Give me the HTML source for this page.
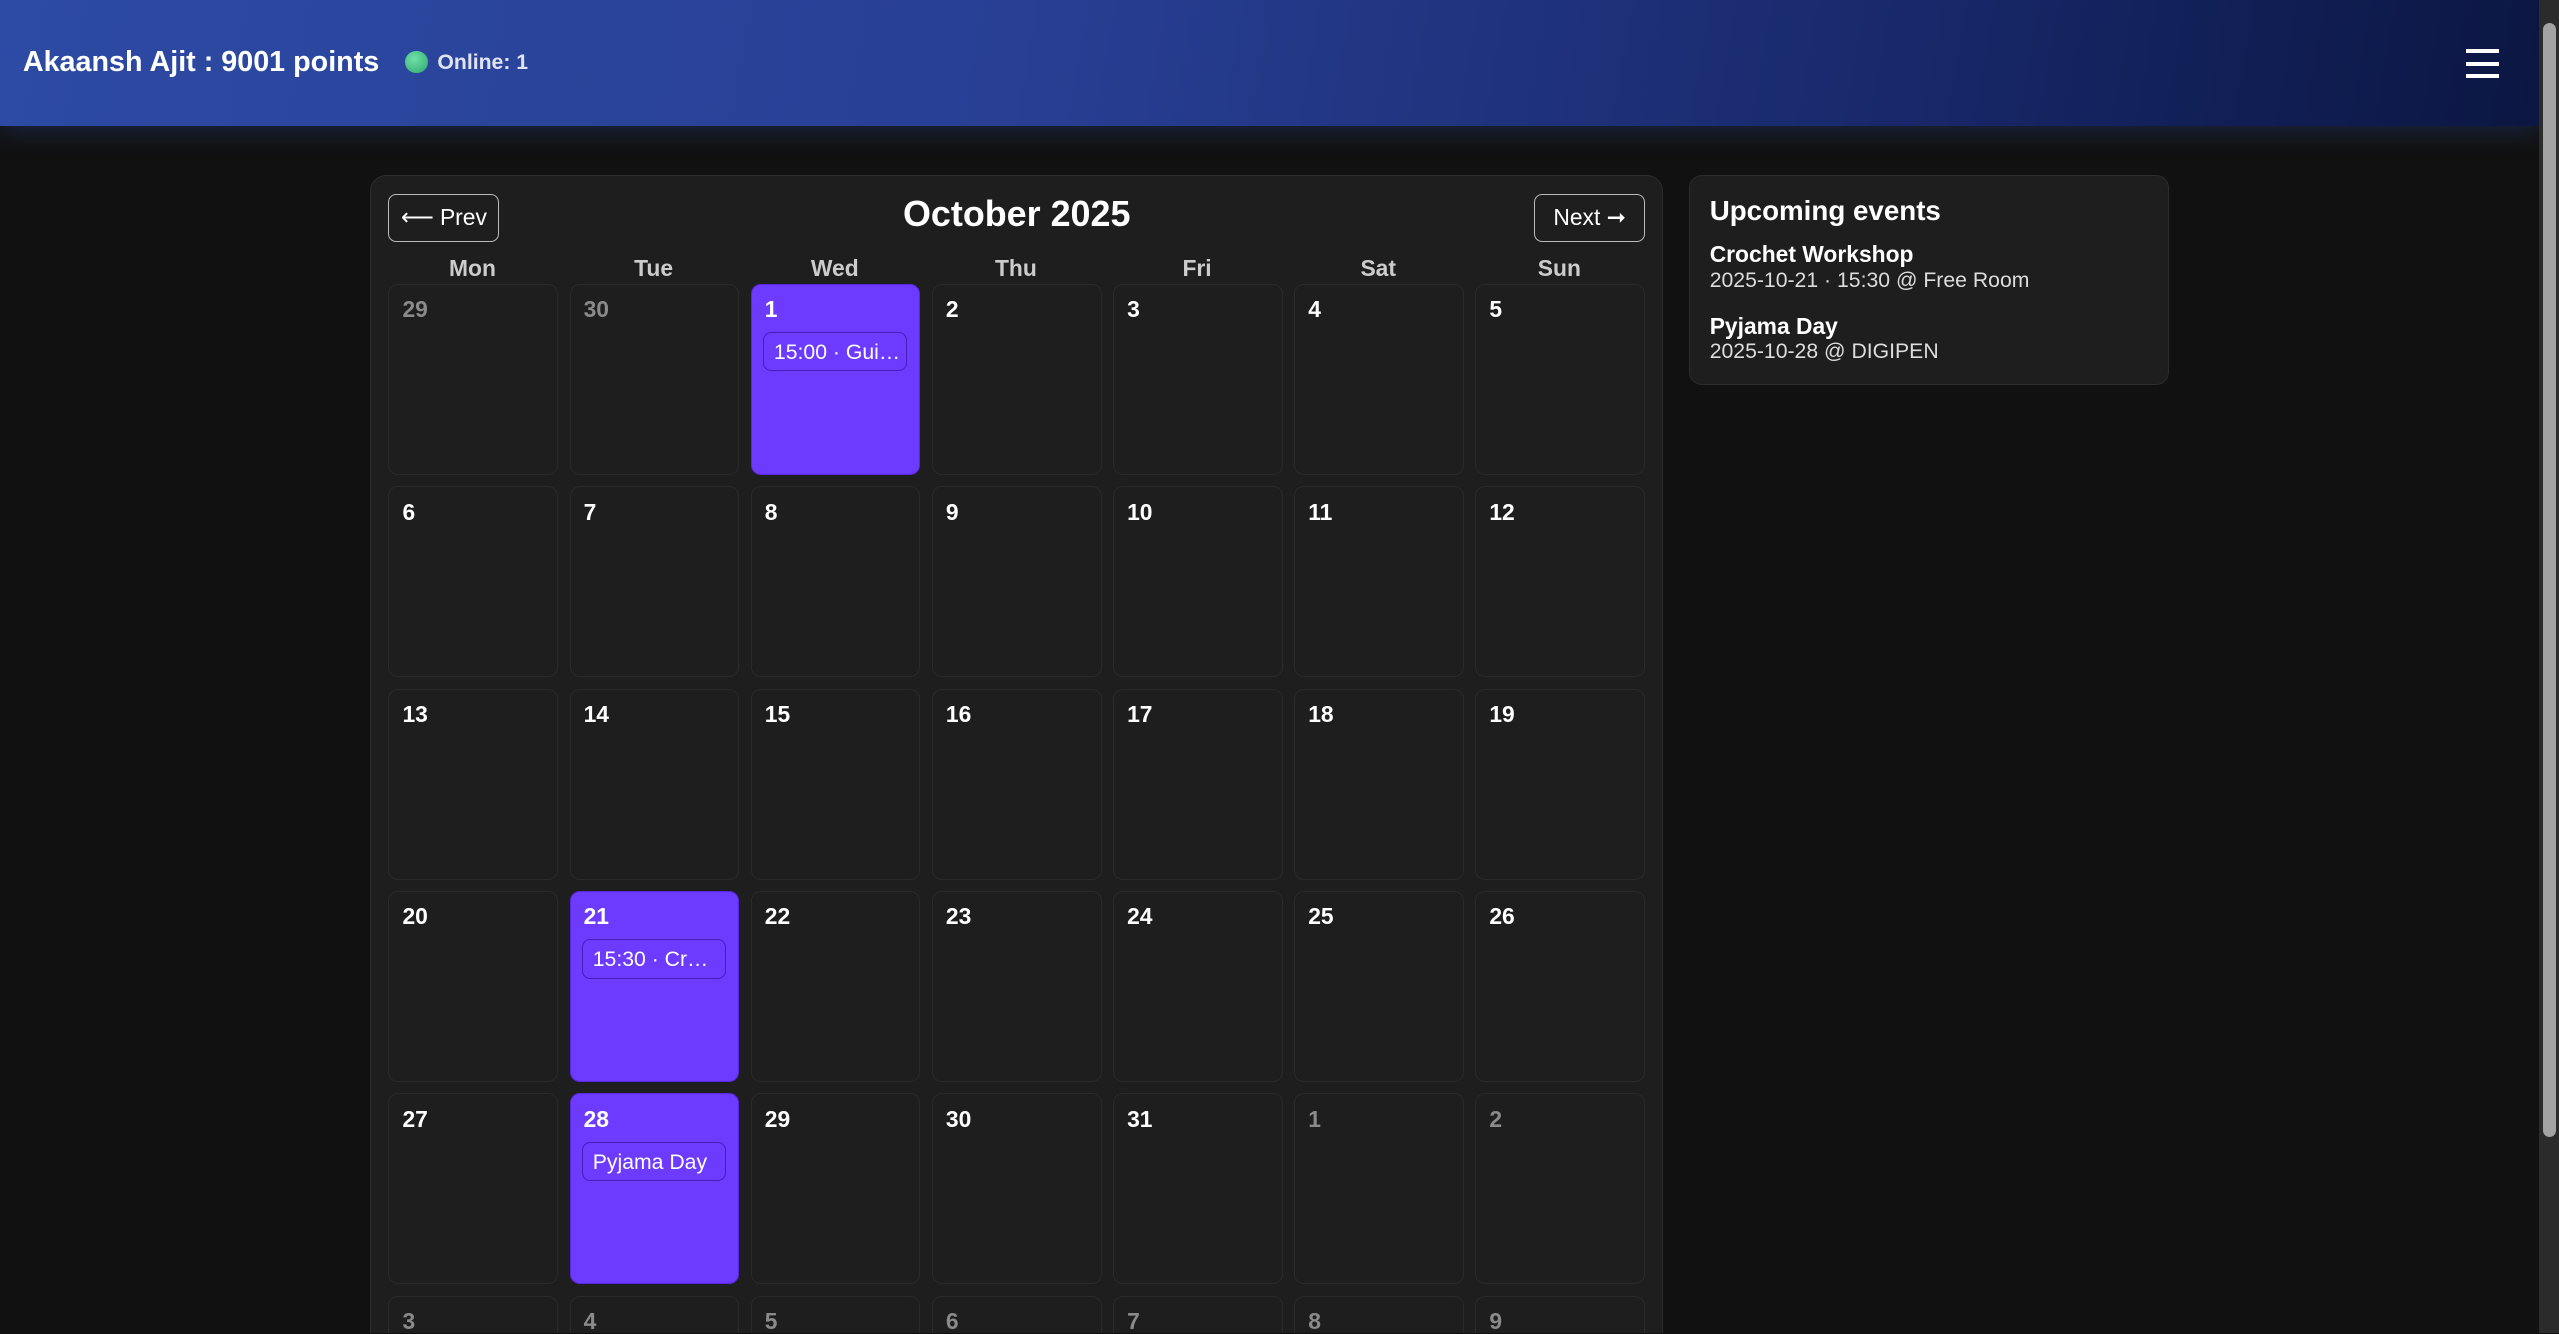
<!DOCTYPE html>
<html><head><meta charset="utf-8"><style>
html,body{margin:0;padding:0;}
body{width:2559px;height:1334px;overflow:hidden;background:#111;}
#root{zoom:1.632;width:1568px;height:817px;position:relative;overflow:hidden;background:#111;font-family:"Liberation Sans",Arial,sans-serif;color:#fff;}
.hdr{position:absolute;left:0;top:0;width:1556px;height:77px;background:linear-gradient(100deg,#2d4aa4 0%,#283f94 40%,#18286a 75%,#0b1642 100%);box-shadow:0 4px 14px rgba(40,60,120,.45);}
.name{position:absolute;left:14px;top:28px;font-size:17.6px;font-weight:bold;}
.dot{position:absolute;left:248px;top:31px;width:14px;height:14px;border-radius:50%;background:radial-gradient(circle at 40% 35%,#6fe0a8,#2fa86e);}
.onl{position:absolute;left:268px;top:31px;font-size:13px;font-weight:bold;color:#e0e4f2;}
.ham{position:absolute;left:1511px;width:20px;height:2.5px;background:#fff;}
.sb{position:absolute;left:1556px;top:0;width:12px;height:818px;background:#2b2b2b;}
.thumb{position:absolute;left:1558px;top:14px;width:8px;height:683px;background:#a3a3a3;border-radius:4px;}
.card{position:absolute;left:227px;top:107px;width:792px;height:730px;background:#1e1e1e;border:1px solid #2c2c2c;border-radius:10px;box-sizing:border-box;}
.btn{position:absolute;top:119px;height:29px;border:1px solid #bbb;border-radius:5px;box-sizing:border-box;font-size:14px;line-height:28px;text-align:center;color:#fff;}
.title{position:absolute;left:453px;width:340px;top:119px;text-align:center;font-size:22px;font-weight:bold;}
.dh{position:absolute;top:156px;width:103px;text-align:center;font-size:14px;font-weight:bold;color:#ccc;}
.cell{position:absolute;width:104px;height:117px;box-sizing:border-box;background:#1e1e1e;border:1px solid #2a2a2a;border-radius:6px;}
.cell .n{position:absolute;left:8px;top:7px;font-size:14px;font-weight:bold;color:#fff;}
.cell.o .n{color:#8a8a8a;}
.cell.e{background:#6c3bff;border-color:#5a26e0;}
.chip{position:absolute;left:7px;top:29px;width:88px;height:24px;box-sizing:border-box;border:1px solid #4a1cb8;border-radius:5px;font-size:13px;line-height:24px;padding-left:6px;white-space:nowrap;overflow:hidden;}
.up{position:absolute;left:1035px;top:107px;width:294px;height:129px;background:#1e1e1e;border:1px solid #2c2c2c;border-radius:8px;box-sizing:border-box;}
.up .t{position:absolute;left:12px;top:12px;font-size:17px;font-weight:bold;}
.up .h{position:absolute;left:12px;font-size:14px;font-weight:bold;}
.up .s{position:absolute;left:12px;font-size:13px;color:#ddd;}
</style></head><body><div id="root">
<div class="hdr">
<div class="name">Akaansh Ajit : 9001 points</div>
<div class="dot"></div>
<div class="onl">Online: 1</div>
<div class="ham" style="top:30px"></div><div class="ham" style="top:38px"></div><div class="ham" style="top:45.5px"></div>
</div>
<div class="card"></div>
<div class="btn" style="left:238px;width:68px">⟵ Prev</div>
<div class="title">October 2025</div>
<div class="btn" style="left:940px;width:68px">Next ➞</div>
<div class="up">
<div class="t">Upcoming events</div>
<div class="h" style="top:40px">Crochet Workshop</div>
<div class="s" style="top:57px">2025-10-21 · 15:30 @ Free Room</div>
<div class="h" style="top:84px">Pyjama Day</div>
<div class="s" style="top:101px">2025-10-28 @ DIGIPEN</div>
</div>
<div class="sb"></div><div class="thumb"></div>

<div class="dh" style="left:238px">Mon</div><div class="dh" style="left:349px">Tue</div><div class="dh" style="left:460px">Wed</div><div class="dh" style="left:571px">Thu</div><div class="dh" style="left:682px">Fri</div><div class="dh" style="left:793px">Sat</div><div class="dh" style="left:904px">Sun</div>

<div class="cell o" style="left:238px;top:174px"><div class="n">29</div></div>
<div class="cell o" style="left:349px;top:174px"><div class="n">30</div></div>
<div class="cell e" style="left:460px;top:174px"><div class="n">1</div><div class="chip">15:00 · Gui…</div></div>
<div class="cell" style="left:571px;top:174px"><div class="n">2</div></div>
<div class="cell" style="left:682px;top:174px"><div class="n">3</div></div>
<div class="cell" style="left:793px;top:174px"><div class="n">4</div></div>
<div class="cell" style="left:904px;top:174px"><div class="n">5</div></div>

<div class="cell" style="left:238px;top:298px"><div class="n">6</div></div>
<div class="cell" style="left:349px;top:298px"><div class="n">7</div></div>
<div class="cell" style="left:460px;top:298px"><div class="n">8</div></div>
<div class="cell" style="left:571px;top:298px"><div class="n">9</div></div>
<div class="cell" style="left:682px;top:298px"><div class="n">10</div></div>
<div class="cell" style="left:793px;top:298px"><div class="n">11</div></div>
<div class="cell" style="left:904px;top:298px"><div class="n">12</div></div>

<div class="cell" style="left:238px;top:422px"><div class="n">13</div></div>
<div class="cell" style="left:349px;top:422px"><div class="n">14</div></div>
<div class="cell" style="left:460px;top:422px"><div class="n">15</div></div>
<div class="cell" style="left:571px;top:422px"><div class="n">16</div></div>
<div class="cell" style="left:682px;top:422px"><div class="n">17</div></div>
<div class="cell" style="left:793px;top:422px"><div class="n">18</div></div>
<div class="cell" style="left:904px;top:422px"><div class="n">19</div></div>

<div class="cell" style="left:238px;top:546px"><div class="n">20</div></div>
<div class="cell e" style="left:349px;top:546px"><div class="n">21</div><div class="chip">15:30 · Cr…</div></div>
<div class="cell" style="left:460px;top:546px"><div class="n">22</div></div>
<div class="cell" style="left:571px;top:546px"><div class="n">23</div></div>
<div class="cell" style="left:682px;top:546px"><div class="n">24</div></div>
<div class="cell" style="left:793px;top:546px"><div class="n">25</div></div>
<div class="cell" style="left:904px;top:546px"><div class="n">26</div></div>

<div class="cell" style="left:238px;top:670px"><div class="n">27</div></div>
<div class="cell e" style="left:349px;top:670px"><div class="n">28</div><div class="chip">Pyjama Day</div></div>
<div class="cell" style="left:460px;top:670px"><div class="n">29</div></div>
<div class="cell" style="left:571px;top:670px"><div class="n">30</div></div>
<div class="cell" style="left:682px;top:670px"><div class="n">31</div></div>
<div class="cell o" style="left:793px;top:670px"><div class="n">1</div></div>
<div class="cell o" style="left:904px;top:670px"><div class="n">2</div></div>

<div class="cell o" style="left:238px;top:794px"><div class="n">3</div></div>
<div class="cell o" style="left:349px;top:794px"><div class="n">4</div></div>
<div class="cell o" style="left:460px;top:794px"><div class="n">5</div></div>
<div class="cell o" style="left:571px;top:794px"><div class="n">6</div></div>
<div class="cell o" style="left:682px;top:794px"><div class="n">7</div></div>
<div class="cell o" style="left:793px;top:794px"><div class="n">8</div></div>
<div class="cell o" style="left:904px;top:794px"><div class="n">9</div></div>
</div></body></html>
